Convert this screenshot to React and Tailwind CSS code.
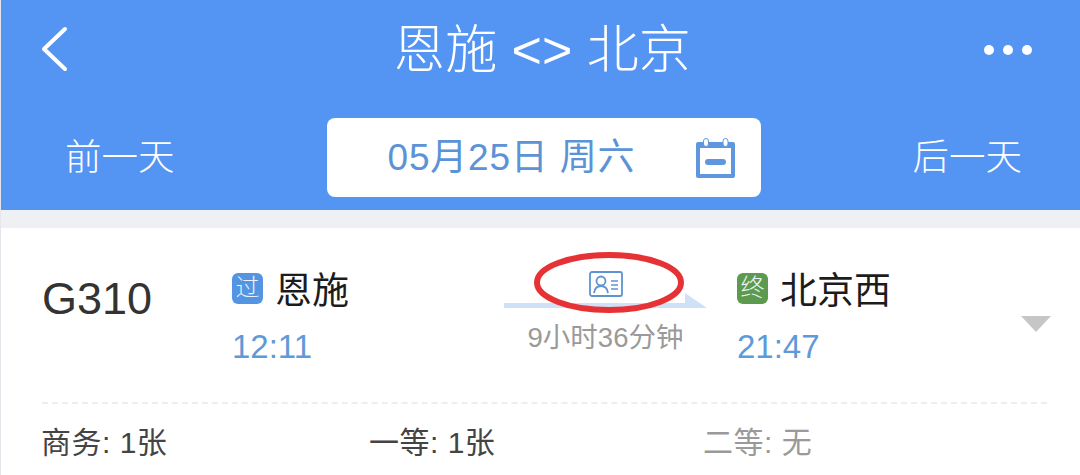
import React from "react";

const font = "font-['Liberation_Sans','Noto_Sans_CJK_SC',sans-serif]";

const Navbar = () => (
  <div className="bg-[#5495f3] h-[210px] flex flex-col text-white">
    {/* Title row */}
    <div className="h-[100px] flex items-center justify-between pl-[39px] pr-[48px]">
      <svg width="28" height="46" viewBox="0 0 28 46" fill="none" className="mb-[2px]">
        <path d="M25 3 L4 23 L25 43" stroke="#fff" strokeWidth="4" strokeLinecap="round" strokeLinejoin="round" />
      </svg>
      <div className="text-[52px] leading-none font-light ml-[32px]">恩施 &lt;&gt; 北京</div>
      <div className="flex gap-[9px]">
        <span className="w-[10px] h-[10px] rounded-full bg-white" />
        <span className="w-[10px] h-[10px] rounded-full bg-white" />
        <span className="w-[10px] h-[10px] rounded-full bg-white" />
      </div>
    </div>

    {/* Date row */}
    <div className="flex items-center justify-between pl-[64px] pr-[58px] mt-[18px]">
      <div className="text-[36.5px] leading-none font-light pt-[2px]">前一天</div>
      <div className="w-[434px] h-[79px] bg-white rounded-[8px] flex items-center pl-[61px] pr-[25px] justify-between text-[#5b93d6]">
        <div className="text-[37px] leading-none tracking-[0.8px]">05月25日 周六</div>
        <svg width="40" height="40" viewBox="0 0 40 40">
          <path d="M2 4 H37 Q39 4 39 6 V38 Q39 40 37 40 H2 Q0 40 0 38 V6 Q0 4 2 4 Z" fill="#5f97de" />
          <rect x="4" y="10" width="31" height="26" fill="#fff" />
          <rect x="9" y="21" width="21" height="6" rx="3" fill="#5f97de" />
          <rect x="7.5" y="0.5" width="5" height="8" rx="2.5" fill="#fff" stroke="#5f97de" />
          <rect x="27" y="0.5" width="5" height="8" rx="2.5" fill="#fff" stroke="#5f97de" />
        </svg>
      </div>
      <div className="text-[36.5px] leading-none font-light pt-[2px]">后一天</div>
    </div>
  </div>
);

const Station = ({ badge, badgeColor, name, time }) => (
  <div className="flex flex-col pt-[16px]">
    <div className="flex items-center gap-[12px] h-[40px]">
      <span className={`w-[31px] h-[31px] rounded-[6px] text-[24px] leading-none text-[#e9f2fb] flex items-center justify-center font-light ${badgeColor}`}>
        {badge}
      </span>
      <span className="text-[37px] leading-none text-[#1c1c1c] pt-[6px]">{name}</span>
    </div>
    <div className="text-[33px] leading-none text-[#5f9ad8] mt-[22px]">{time}</div>
  </div>
);

const TrainCard = () => (
  <div className="bg-white pl-[41px] pr-[31px] pt-[24px] flex-1">
    <div className="flex h-[100px] relative">
      <div className="w-[190px] text-[45px] leading-none text-[#333] pt-[24px]">G310</div>

      <div className="w-[272px]">
        <Station badge="过" badgeColor="bg-[#5495e3]" name="恩施" time="12:11" />
      </div>

      {/* Duration */}
      <div className="w-[203px] flex flex-col items-center">
        <div className="relative h-[56px] w-[203px]">
          <svg width="34" height="26" viewBox="0 0 34 26" fill="none" className="mx-auto mt-[19px]">
            <rect x="1" y="1" width="32" height="24" rx="2" stroke="#5f93cf" strokeWidth="1.8" />
            <circle cx="12" cy="10" r="4.5" stroke="#5f93cf" strokeWidth="1.8" />
            <path d="M5 22 Q6 15 12 15 Q18 15 19 22" stroke="#5f93cf" strokeWidth="1.8" />
            <path d="M22 10 H29 M22 14 H29 M22 18 H29" stroke="#5f93cf" strokeWidth="1.5" />
          </svg>
          <svg width="203" height="15" viewBox="0 0 203 15" className="absolute left-0 bottom-0">
            <path d="M0 10 H181 V0 L203 15 H0 Z" fill="#cfe1f6" />
          </svg>
        </div>
        <div className="text-[27.5px] leading-none text-[#9a9a9a] mt-[16px] whitespace-nowrap">9小时36分钟</div>
      </div>

      <div className="ml-[30px] flex-1">
        <Station badge="终" badgeColor="bg-[#5c9a4e]" name="北京西" time="21:47" />
      </div>

      <svg width="30" height="17" viewBox="0 0 30 17" className="absolute right-[-2px] top-[63px]">
        <path d="M0 1 H30 L15 17 Z" fill="#c6c6c6" />
      </svg>

      {/* Red annotation */}
      <svg width="156" height="68" viewBox="0 0 156 68" fill="none" className="absolute left-[490px] top-[0px]">
        <ellipse cx="77" cy="30.5" rx="72" ry="27.5" stroke="#e63235" strokeWidth="6" />
      </svg>
    </div>

    <div className="border-t-2 border-dashed border-[#eceef0] mt-[50px] mr-[2px]" />

    <div className="flex text-[30px] leading-none tracking-[0.5px] mt-[24px] -ml-[1px]">
      <div className="w-[328px] text-[#444]">商务: 1张</div>
      <div className="w-[334px] text-[#444]">一等: 1张</div>
      <div className="text-[#9a9a9a]">二等: 无</div>
    </div>
  </div>
);

const App = () => (
  <div className={`w-[1080px] h-[475px] overflow-hidden flex flex-col border-l border-[#e8e4ec] ${font}`}>
    <Navbar />
    <div className="h-[18px] bg-[#eef0f3]" />
    <TrainCard />
  </div>
);

export default App;
